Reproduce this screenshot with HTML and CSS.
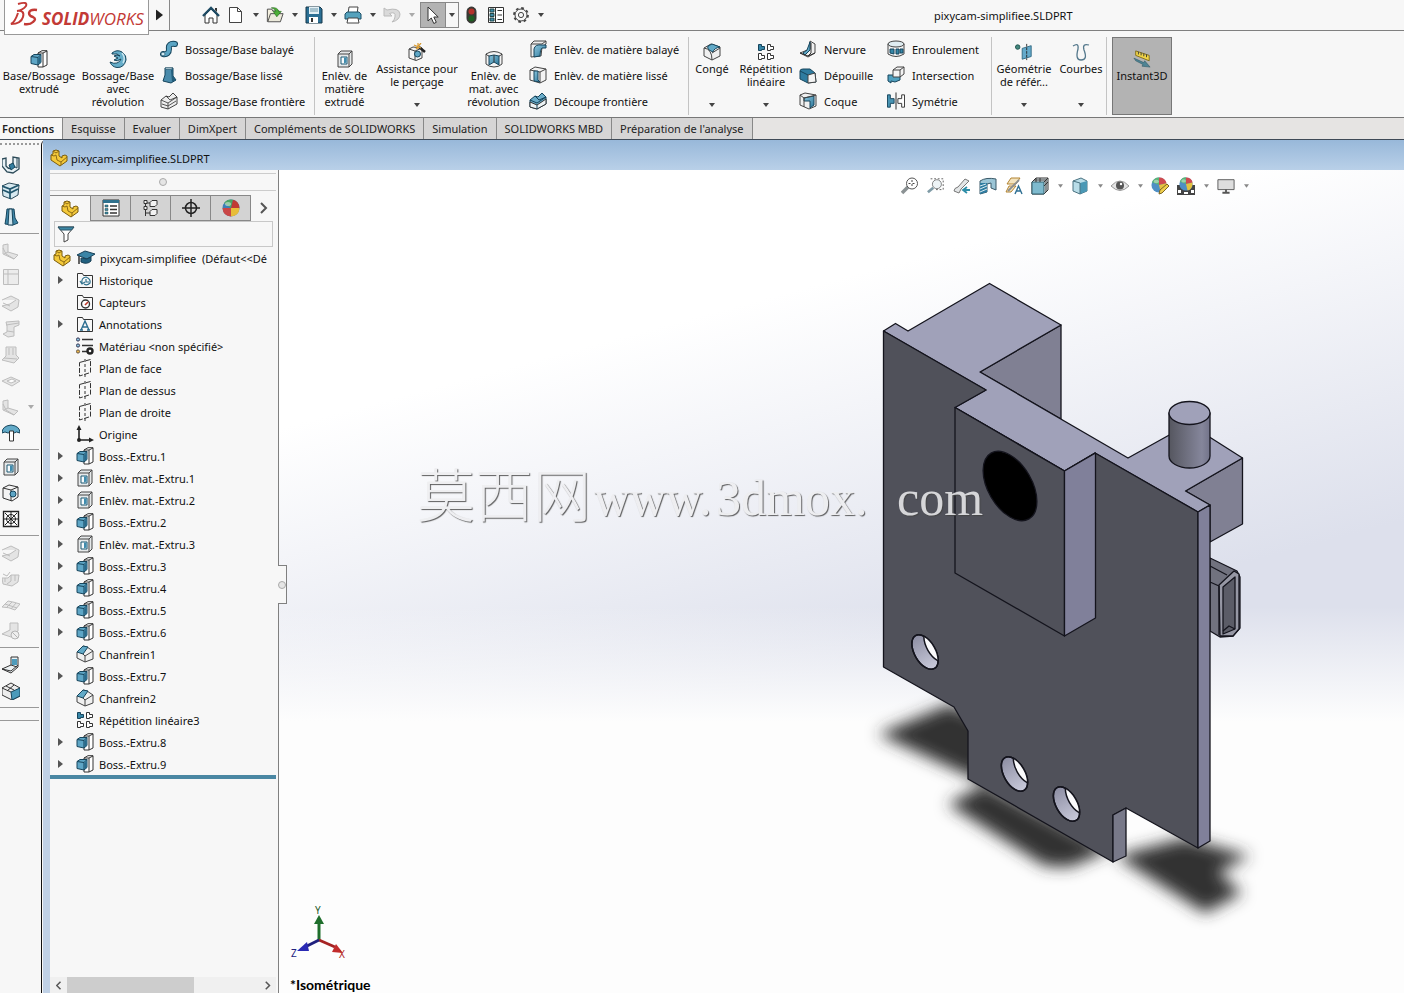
FILE: index.html
```html
<!DOCTYPE html>
<html lang="fr">
<head>
<meta charset="utf-8">
<title>pixycam-simplifiee.SLDPRT</title>
<link rel="stylesheet" href="styles.css">
</head>
<body>
<svg class="sprite" aria-hidden="true">
  <defs>
    <linearGradient id="blue" x1="0" y1="0" x2="1" y2="1"><stop offset="0" stop-color="#8cc6de"/><stop offset="1" stop-color="#2b7699"/></linearGradient>
    <linearGradient id="rod" x1="0" x2="1"><stop offset="0" stop-color="#55565f"/><stop offset=".8" stop-color="#85869b"/><stop offset="1" stop-color="#73748a"/></linearGradient>
    <linearGradient id="bore" x1="0" x2="1"><stop offset="0" stop-color="#8d8ea3"/><stop offset="1" stop-color="#c9cadb"/></linearGradient>
    <filter id="soft" x="-30%" y="-30%" width="160%" height="160%"><feGaussianBlur stdDeviation="8"/></filter>
  </defs>
  <symbol id="home" viewBox="0 0 18 18"><path d="M3 9v8h4v-5h4v5h4V9L9 3z" fill="#fff" stroke="#333"/><path d="M1 10 9 2l8 8" fill="none" stroke="#1d4a63" stroke-width="2.4"/><path d="M13 2h2v4l-2-2z" fill="#333"/></symbol>
  <symbol id="new" viewBox="0 0 18 18"><path d="M2.500 1.500h8l4 4v11h-12z" fill="#fff" stroke="#444"/><path d="M10.500 1.500v4h4" fill="none" stroke="#444"/></symbol>
  <symbol id="open" viewBox="0 0 20 18"><path d="M1.500 16.500v-14h5l1 2h7v3" fill="#f4f0df" stroke="#444"/><path d="m2 16.500 3-9h14l-3 9z" fill="#eceadb" stroke="#444"/><path d="M6 1q7-1 8 4h3l-5 6-4-6h3q-1-3-5-4" fill="#4caf35" stroke="#246b1a" stroke-width=".7"/></symbol>
  <symbol id="save" viewBox="0 0 18 18"><path d="M1 1h14l2 2v14H1z" fill="#2b6f94" stroke="#17384a"/><path d="M4 1h10v7H4z" fill="#e3f0f5"/><path d="M5 3h8M5 5h8" stroke="#6b95a8"/><path d="M4 11h9v6H4z" fill="#fff"/><path d="M6 12h2v4H6z" fill="#333"/></symbol>
  <symbol id="print" viewBox="0 0 18 18"><path d="M5 1h9l-1 7H4z" fill="#fff" stroke="#444"/><path d="m1 8 2-2h12l2 2v5H1z" fill="#55a2bd" stroke="#1d5069"/><path d="M4 12h10l1 5H3z" fill="#fff" stroke="#444"/></symbol>
  <symbol id="undo" viewBox="0 0 18 18"><path d="m1 2v8h8L6.500 7.500Q13 5 12 11q-.5 3-3 5 8-2 8-8-1-7-13-4z" fill="#dadada" stroke="#bbb"/></symbol>
  <symbol id="cursor" viewBox="0 0 18 18"><path d="M4 1v14l3.300-3 2.500 5.500 2.500-1.200L9.800 11h4.400z" fill="#fff" stroke="#333"/></symbol>
  <symbol id="light" viewBox="0 0 18 18"><rect x="5" y="1" width="9" height="16" rx="4.500" fill="#3a3a33" stroke="#333"/><circle cx="9.500" cy="5.500" r="3" fill="#b3312b"/><circle cx="9.500" cy="12.500" r="3" fill="#1d5e22"/></symbol>
  <symbol id="options" viewBox="0 0 18 18"><path d="M1.500 1.500h15v15h-15z" fill="#fff" stroke="#333"/><path d="M3 3h4v3H3zM3 7.500h4v3H3zM3 12h4v3H3z" fill="#3d8cab" stroke="#244"/><path d="M10.500 4.500h4.500M10.500 9h4.500M10.500 13.500h4.500" stroke="#333"/><path d="M8.500 1v16" stroke="#333"/></symbol>
  <symbol id="gear" viewBox="0 0 18 18"><circle cx="9" cy="9" r="7" fill="none" stroke="#444" stroke-width="1.800" stroke-dasharray="2.700 2.800"/><circle cx="9" cy="9" r="6" fill="#f7f7f7" stroke="#444"/><circle cx="9" cy="9" r="2.600" fill="none" stroke="#444"/></symbol>

  <symbol id="boss" viewBox="0 0 18 18"><path d="M8 3 12 .7h5V15l-4 2H8z" fill="#fff" stroke="#333"/><path d="M13 3v14M13 3l4-2M8 3h5" fill="none" stroke="#333"/><path d="m1 6.500 3-2h7v8l-3 2.500-7-1.500z" fill="#5ea6c6" stroke="#16455c"/><path d="m1 6.500 7 1V15M8 7.500l3-3" fill="none" stroke="#16455c"/><path d="m8.500 8 2-2v6.500l-2 1.700z" fill="#276b8c"/></symbol>
  <symbol id="cut" viewBox="0 0 18 18"><path d="m2 4 3-3h11v13l-3 3H2z" fill="#e6e9ea" stroke="#444"/><path d="M2 4h11v13M13 4l3-3" fill="none" stroke="#444"/><path d="M5 7h6v7H5z" fill="#f7fbfd" stroke="#1d5872"/><path d="M8 7.500h2.500v5L8 13.500z" fill="#3f8cae"/></symbol>
  <symbol id="revolve" viewBox="0 0 18 18"><path d="M3 3q5-4 10-1 5 4 4 8-2 8-9 7.500Q3 17 1 12q4 2 7 1 3-1 4-4-4 3-7 1l4-2-4-2q3-2 6 0Q9 3 3 4z" fill="#65adc9" stroke="#16455c"/><path d="M13 3q4 5 1 10" fill="none" stroke="#c9e6f0" stroke-width="1.500"/></symbol>
  <symbol id="sweep" viewBox="0 0 18 18"><path d="M3 14q6 1 6-5-1-6 6-5" fill="none" stroke="#16455c" stroke-width="6" stroke-linecap="round"/><path d="M3 14q6 1 6-5-1-6 6-5" fill="none" stroke="#5ba5c4" stroke-width="4" stroke-linecap="round"/><ellipse cx="3" cy="14" rx="2" ry="1.800" fill="#d2e9f1" stroke="#16455c" stroke-width=".6"/></symbol>
  <symbol id="loft" viewBox="0 0 18 18"><path d="M5 2h8v8l3 4-5 3-8-2 2-6z" fill="#4a8bab" stroke="#16455c"/><path d="M5 2h8l-2 1.500H6z" fill="#d7ebf2" stroke="#16455c" stroke-width=".6"/><path d="m11 4 1 12 4-2-3-4V3z" fill="#225d7b"/></symbol>
  <symbol id="boundary" viewBox="0 0 18 18"><path d="m1 8 5-4 3 1 4-4 4 4v7l-9 5-7-2z" fill="#eee" stroke="#444"/><path d="m1 8 7 3 9-6M8 11v6M6 4l4 4 7-3M2 12l6 2 8-5" fill="none" stroke="#444" stroke-width=".9"/></symbol>
  <symbol id="hole" viewBox="0 0 18 18"><path d="m1 6 4-2 9 1v10l-6 2.500L1 15z" fill="#f3f3f3" stroke="#444"/><path d="m1 6 6 2v9M7 8l7-3" fill="none" stroke="#444"/><circle cx="9.500" cy="11" r="3" fill="#5ea6c6" stroke="#16455c"/><path d="m11 4 6 5" stroke="#222" stroke-width="2.500"/><path d="M10 0v6M6 2l7 3M13 0 8 6" stroke="#d99b31" stroke-width="1.200"/></symbol>
  <symbol id="revcut" viewBox="0 0 18 18"><path d="M1 4v10q3 3 8 3t8-3V4q-8-5-16 0z" fill="#f3f3f3" stroke="#444"/><path d="m9 5-5 1v9l5-3 5 3V6z" fill="url(#blue)" stroke="#16455c"/><path d="M1 4q2 2 3 2M17 4q-2 2-3 2M9 5v7" fill="none" stroke="#333"/></symbol>
  <symbol id="sweepcut" viewBox="0 0 18 18"><path d="M2 4 5 1h12v3l-4 3-1 9-10 1z" fill="#eee" stroke="#444"/><path d="M2 4h11l4-3" fill="none" stroke="#444"/><path d="M5 17V9q1-5 8-4h4v3h-4q-2 1-2 8z" fill="url(#blue)" stroke="#16455c"/></symbol>
  <symbol id="loftcut" viewBox="0 0 18 18"><path d="m1 4 5-3 11 2v11l-6 3L1 14z" fill="#f3f3f3" stroke="#444"/><path d="m1 4 10 2v11M11 6l6-3" fill="none" stroke="#444"/><path d="M5 5h4v9l2 2-6-1z" fill="url(#blue)" stroke="#16455c"/></symbol>
  <symbol id="boundcut" viewBox="0 0 18 18"><path d="m1 8 5-4 3 1 4-4 4 4v7l-9 5-7-2z" fill="#6badca" stroke="#16455c"/><path d="m1 10 7 3 9-6v5l-9 5-7-2z" fill="#edf3f5" stroke="#333"/><path d="M8 13v4M6 4l4 4 7-3M1 8l7 3 9-6" fill="none" stroke="#16455c"/></symbol>
  <symbol id="fillet" viewBox="0 0 18 18"><path d="m1 5 7-4 9 3v9l-8 4-8-4z" fill="#f0f0f0" stroke="#444"/><path d="M5 3 9 1l8 3q-6 1-7 5L6 7Q4 5 5 3" fill="#62aac8" stroke="#16455c"/><path d="M1 5q8 1 8 12M9 10l8-5" fill="none" stroke="#444"/></symbol>
  <symbol id="chamfer" viewBox="0 0 18 18"><path d="m1 7 6-6 4 1 6 4v8l-8 3-8-4z" fill="#f0f0f0" stroke="#444"/><path d="m1 7 6-6 5 1-5 7z" fill="#62aac8" stroke="#16455c"/><path d="m7 9 2 2v6M9 11l8-5" fill="none" stroke="#444"/></symbol>
  <symbol id="pattern" viewBox="0 0 18 18"><path d="M1.500 1.500h3v2h3v3h-3v1h-3z" fill="#3686a8" stroke="#16455c"/><path d="M10.500 1.500h3v2h3v3h-3v1h-3zM1.500 10.500h3v2h3v3h-3v1h-3zM10.500 10.500h3v2h3v3h-3v1h-3z" fill="#fff" stroke="#333"/></symbol>
  <symbol id="rib" viewBox="0 0 18 18"><path d="m1 13 10-4V1l5 3v9l-7 4z" fill="#f0f0f0" stroke="#444"/><path d="m4 13 4-3 3-8v8l-5 5z" fill="#62aac8" stroke="#16455c"/><path d="M1 13l8 3 3-3V3M9 16l7-3" fill="none" stroke="#333"/></symbol>
  <symbol id="draft" viewBox="0 0 18 18"><path d="M1 5q0-2 3-2h7l5 4 1 9-8 1-8-4z" fill="#2f7ca0" stroke="#16455c"/><path d="m9 9 7-2 1 9-8 1z" fill="#f4f4f4" stroke="#444"/><path d="m1 5 8 4" stroke="#16455c"/></symbol>
  <symbol id="shell" viewBox="0 0 18 18"><path d="m1 3 5-2 11 2v11l-7 3-9-4z" fill="#f0f0f0" stroke="#444"/><path d="m5 6 10-2v9l-4 3V9H5z" fill="url(#blue)" stroke="#16455c"/><path d="M1 3l4 3v9M5 6l12-3" fill="none" stroke="#444"/></symbol>
  <symbol id="wrap" viewBox="0 0 18 18"><path d="M1 4v10q8 5 16 0V4z" fill="#f4f4f4" stroke="#444"/><ellipse cx="9" cy="4" rx="8" ry="3" fill="#e0edf2" stroke="#444"/><path d="M3 9h4v5l-4-1zM9 9h3v5H9zM13 9h3v4h-3z" fill="#3587a8" stroke="#16455c"/></symbol>
  <symbol id="intersect" viewBox="0 0 18 18"><path d="M1 9h8l4-2v7l-5 2-4-1v2l-3-2z" fill="#51a0bf" stroke="#16455c"/><path d="m6 4 4-3h7v7l-4 3H6z" fill="#f4f4f4" stroke="#444"/><path d="M6 4h7v7M13 4l4-3" fill="none" stroke="#444"/></symbol>
  <symbol id="mirror" viewBox="0 0 19 18"><path d="M.500 2.500h3v4h4v5h-4v4h-3z" fill="#4894b3" stroke="#16455c"/><path d="M9.500 0v18" stroke="#222"/><path d="M18.500 2.500h-3v4h-4v5h4v4h3z" fill="#fff" stroke="#333"/></symbol>
  <symbol id="refgeom" viewBox="0 0 20 18"><circle cx="3" cy="3.500" r="2.500" fill="#44877f" stroke="#1c524c"/><path d="m8 5 10-3v12l-10 3z" fill="#64aacb" stroke="#2e6680"/><path d="M13 0v18" stroke="#222" stroke-dasharray="3 1"/></symbol>
  <symbol id="curves" viewBox="0 0 18 18"><path d="M1 3q6-4 5 3-3 11 3 11 7 0 3-10-2-7 5-5" fill="none" stroke="#54788c" stroke-width="1.300"/></symbol>
  <symbol id="instant" viewBox="0 0 20 20"><path d="m3 1 15 5v6L3 6z" fill="#f2d548" stroke="#7d6a18"/><path d="M6 2v3M9 3v3M12 4v3M15 5v3" stroke="#333"/><path d="m1 9 11 5 1-2 6 7-9-1 1-2-8-4z" fill="#4f8494" stroke="#2c5663" stroke-width=".6"/></symbol>

  <symbol id="part" viewBox="0 0 18 18"><path d="m1 6 2-1V2l3-1 3 1v5l3 2V7l3-1 2 1v5l-7 5-9-6z" fill="#f4c93a" stroke="#7b5c0d"/><path d="m1 6 3 1 2-1 1 5 4 2v3M3 2l3 2 3-2M11 13l6-5" fill="none" stroke="#8c6b16"/></symbol>
  <symbol id="cap" viewBox="0 0 20 18"><path d="m1 6 8-4 10 3-8 5z" fill="#3a84a6" stroke="#173f56"/><path d="m5 9 6 1 4-2v4q-4 4-10 1z" fill="#20607f" stroke="#173f56"/><path d="M3 7v8" stroke="#333" stroke-width="1.500"/></symbol>
  <symbol id="folder" viewBox="0 0 18 18"><path d="M1.500 16.500V2.500h5l1 2h9v12z" fill="#f8f8f8" stroke="#333"/></symbol>
  <symbol id="history" viewBox="0 0 18 18"><use href="#folder"/><path d="M6 12q-1-5 4-6 5 2 4 6-3 3-6 1M4 10l2 3 3-2M10 8v3h3" fill="none" stroke="#2f718d" stroke-width="1.200"/></symbol>
  <symbol id="sensor" viewBox="0 0 18 18"><use href="#folder"/><circle cx="9.500" cy="11" r="4" fill="#fff" stroke="#333" stroke-width="1.400"/><path d="m9 12 3-3" stroke="#c0392b" stroke-width="1.600"/></symbol>
  <symbol id="annot" viewBox="0 0 18 18"><use href="#folder"/><path d="m5 15 4-9 4 9M6.500 12h5M4 15h3M11 15h3" fill="none" stroke="#2b6d90" stroke-width="1.400"/></symbol>
  <symbol id="material" viewBox="0 0 18 18"><circle cx="2" cy="2.500" r="1.600" fill="#8cc6de" stroke="#335"/><circle cx="2" cy="8.500" r="1.600" fill="#8cc6de" stroke="#335"/><circle cx="2" cy="14.500" r="1.600" fill="#e9b64a" stroke="#654"/><path d="M6 2.500h11M6 8.500h11M6 14.500h5" stroke="#333" stroke-width="1.500"/><circle cx="14" cy="14" r="2.500" fill="none" stroke="#222" stroke-width="2.400"/></symbol>
  <symbol id="plane" viewBox="0 0 18 18"><path d="M3.500 3.500 14.500.500v13l-11 3.500z" fill="none" stroke="#333" stroke-dasharray="5 1.500"/><path d="M9 0v18" stroke="#333" stroke-dasharray="3 2"/></symbol>
  <symbol id="origin" viewBox="0 0 18 18"><path d="M3 4v11h12" fill="none" stroke="#222" stroke-width="1.600"/><path d="M3 0 .500 5h5zM18 15l-5-2.500v5z" fill="#222"/><circle cx="3" cy="15" r="2" fill="#222"/></symbol>
  <symbol id="list" viewBox="0 0 18 18"><path d="M1 1h16v16H1z" fill="#fff" stroke="#333"/><path d="M1 1h16v3H1z" fill="#2f718d"/><path d="M3 6h3v2H3zM3 9.500h3v2H3zM3 13h3v2H3z" fill="#3d8cab" stroke="#244" stroke-width=".5"/><path d="M8 7h7M8 10.500h7M8 14h7" stroke="#333" stroke-width="1.300"/></symbol>
  <symbol id="config" viewBox="0 0 18 18"><path d="M3.500 1v16M3.500 4h6M3.500 14h6" fill="none" stroke="#333"/><path d="M2 1.500h3v3H2zM8 3.500l2-2h5v4l-2 2H8zM8 12.500l2-2h5v4l-2 2H8zM2 7.500h3v3H2z" fill="#f2f2f2" stroke="#333"/></symbol>
  <symbol id="target" viewBox="0 0 18 18"><circle cx="9" cy="9" r="5.500" fill="none" stroke="#222" stroke-width="1.500"/><path d="M9 0v18M0 9h18" stroke="#222" stroke-width="1.500"/></symbol>
  <symbol id="ball" viewBox="0 0 18 18"><circle cx="9" cy="9" r="8.500" fill="#3c7fb5"/><path d="M9 9 2 4Q6-.5 11 .8z" fill="#4aa564"/><path d="m9 9 2-8.200Q17 2 17.500 9z" fill="#c03a34"/><path d="M9 9h8.500Q17 17 9 17.500z" fill="#e8bd39"/><path d="M9 9v8.500Q1 17 .5 9z" fill="#c94646"/><ellipse cx="6" cy="5" rx="3" ry="2" fill="#fff" opacity=".45"/></symbol>
  <symbol id="ballview" viewBox="0 0 18 18"><circle cx="9" cy="9" r="8.500" fill="#4f8fc4"/><path d="M9 9 1 6Q4 0 9 .5z" fill="#5bb377"/><path d="M9 9V.5q7 0 8.500 6.500z" fill="#cf4a4f"/><path d="m9 9 8.500-2q0 9-6.500 10.300z" fill="#e5c23f"/><ellipse cx="6" cy="5" rx="3" ry="2" fill="#fff" opacity=".4"/></symbol>
  <symbol id="filter" viewBox="0 0 18 18"><path d="M1 2h16l-6 7v6l-4 2V9z" fill="#fff" stroke="#444"/><path d="M1 2h16l-2.500 3h-11z" fill="#3c87a5" stroke="#2b5568"/></symbol>

  <symbol id="ucut" viewBox="0 0 18 18"><path d="m0 3 4-1v8q4 5 7 0V1l6 1v11l-6 4-6-1-5-6z" fill="#e8f1f5" stroke="#2c4a58" stroke-width="1.300"/><path d="M11 10l4 2V2" fill="none" stroke="#2c4a58"/><path d="m7 9 4-2 2 4-4 3z" fill="#357fa1" stroke="#16455c"/></symbol>
  <symbol id="bend" viewBox="0 0 18 18"><path d="m0 4 7-3 10 2-1 10-7 4-8-3z" fill="#d7e9f0" stroke="#2c4a58"/><path d="m0 4 8 3 9-4M1 8l7 3 8-4M8 7v10" fill="none" stroke="#21566d" stroke-width="1.700"/></symbol>
  <symbol id="flare" viewBox="0 0 18 18"><path d="M5 1h7l1 9 3 5-5 2-8-1 1-6z" fill="#3f87a8" stroke="#16455c"/><path d="M7 1h3l1 16H6z" fill="#cfe3eb" stroke="#16455c"/></symbol>
  <symbol id="g1" viewBox="0 0 18 18"><path d="m1 3 5-1v8l10 3-4 4-11-5z" fill="#e4e4e4" stroke="#bdbdbd"/><path d="m1 6 3 6 8 5M6 10l-4 2" fill="none" stroke="#bdbdbd"/></symbol>
  <symbol id="g2" viewBox="0 0 18 18"><path d="M1.500 1.500h15v15h-15zM1 6h16M6 1v16" fill="#ececec" stroke="#bdbdbd"/></symbol>
  <symbol id="g3" viewBox="0 0 18 18"><path d="m0 6 9-4 8 4-1 7-7 4-9-5 8-2 6-4M1 9l7 3" fill="#e4e4e4" stroke="#bdbdbd"/></symbol>
  <symbol id="g4" viewBox="0 0 18 18"><path d="m4 2 13-1v4l-5 2v9l-6 1-5-3 4-2V6z" fill="#e4e4e4" stroke="#bdbdbd"/><path d="m4 5 13-2M5 11l7 1" stroke="#bdbdbd"/></symbol>
  <symbol id="g5" viewBox="0 0 18 18"><path d="M4 1h10v8l3 3-5 5-12-3 4-4z" fill="#e4e4e4" stroke="#bdbdbd"/><path d="M7 2v7M11 2v7M2 12l13 1" stroke="#bdbdbd"/></symbol>
  <symbol id="g6" viewBox="0 0 18 18"><path d="m0 9 9-4 9 4-8 5z" fill="#e6e6e6" stroke="#bdbdbd"/><path d="m5 9 5-2 4 2-5 2z" fill="#fff" stroke="#bdbdbd"/></symbol>
  <symbol id="g7" viewBox="0 0 18 18"><path d="M0 8h6l3-3h8l-1 7-6 4-9-2z" fill="#e4e4e4" stroke="#bdbdbd"/><path d="M9 5v6l-4 3M13 5v6M3 8v4M1 4l4 2 3-4" fill="none" stroke="#bdbdbd"/></symbol>
  <symbol id="g8" viewBox="0 0 18 18"><path d="m0 11 6-6q6 1 12 3l-5 6Q7 11 0 11z" fill="#e8e8e8" stroke="#bdbdbd"/><path d="m4 12 6-6M9 13l5-6M3 8l12 4" stroke="#bdbdbd"/></symbol>
  <symbol id="g9" viewBox="0 0 18 18"><path d="M8 1h8v8l-7 6-9-3 8-4z" fill="#e4e4e4" stroke="#bdbdbd"/><circle cx="13" cy="13" r="4" fill="#eee" stroke="#b5b5b5"/><path d="m10 10 6 6" stroke="#b5b5b5"/></symbol>
  <symbol id="umbrella" viewBox="0 0 18 18"><path d="M0 9q0-7 9-8 9 1 9 8-4-2-6 0-3-2-6 0-3-2-6 0z" fill="#62aac8" stroke="#16455c"/><path d="M7.500 7h4v10h-4z" fill="#fff" stroke="#333"/></symbol>
  <symbol id="grid" viewBox="0 0 18 18"><path d="M1.500 1.500h15v15h-15z" fill="#fff" stroke="#222" stroke-width="1.400"/><path d="M9 1v16M1 9h16M3 3l12 12M15 3 3 15" stroke="#222"/><circle cx="9" cy="9" r="4.500" fill="none" stroke="#222"/></symbol>
  <symbol id="box" viewBox="0 0 18 18"><path d="m1 4 6-3 9 2v10l-6 4-9-3z" fill="#f4f4f4" stroke="#333"/><path d="m1 4 8 2 7-3M9 6v11" fill="none" stroke="#333"/><circle cx="11" cy="10" r="3" fill="#5ea6c6" stroke="#16455c"/></symbol>
  <symbol id="hinge" viewBox="0 0 18 18"><path d="M9 1h7v10l-7 6-9-4 9-4z" fill="#edf2f4" stroke="#333"/><path d="M10 3h5v6h-5z" fill="#4f9cbc"/><path d="m0 13 9 2 7-6M9 9l6 2" fill="none" stroke="#333"/></symbol>
  <symbol id="weld" viewBox="0 0 18 18"><path d="m0 6 9-5 9 5v8l-8 4-10-5z" fill="#ededed" stroke="#333"/><path d="m9 10 9-4v8l-8 4z" fill="#4a9aba" stroke="#16455c"/><path d="m0 6 9 4M4 4l8 4M5 9l7-6" stroke="#333"/></symbol>

  <symbol id="zoomfit" viewBox="0 0 18 18"><path d="m1 16 6-6" stroke="#8b9294" stroke-width="3.500"/><circle cx="11" cy="6.500" r="5.500" fill="#fff" stroke="#555"/><path d="M11 3v7M7.500 6.500h7" stroke="#444" stroke-dasharray="2 2"/></symbol>
  <symbol id="zoomarea" viewBox="0 0 20 18"><path d="M4 1h14v12H8" fill="none" stroke="#555" stroke-dasharray="2 2"/><path d="m1 16 6-5" stroke="#7f9ba6" stroke-width="3"/><circle cx="11" cy="7" r="5" fill="#eef4f6" stroke="#777"/></symbol>
  <symbol id="prev" viewBox="0 0 18 18"><path d="M1 14q0-3 4-4l7-8 4 2-8 8-2 4z" fill="#e3e6e7" stroke="#777"/><path d="M17 13h-6m3-3-4 3 4 3" fill="none" stroke="#2e8ea8" stroke-width="1.800"/></symbol>
  <symbol id="section" viewBox="0 0 18 18"><path d="M1 4q6-4 16-2v11l-5-2V6l-4 1v8l-7 2z" fill="#9bc5d6" stroke="#3a5968"/><path d="M1 6h7v9l-7 2z" fill="#2f7ca0"/><path d="m1 9 6-2M1 12l7-3M1 15l7-3" stroke="#d5e9f0"/></symbol>
  <symbol id="viewannot" viewBox="0 0 18 18"><path d="M6 1h9l-4 6H2zM4 9h7l-5 6H1z" fill="#f3e3be" stroke="#b28432"/><path d="M3 14 14 3" stroke="#8a8d8f" stroke-width="1.800"/><path d="m10 17 3.500-8 3.500 8M11 14h5" fill="none" stroke="#2e6f93" stroke-width="1.400"/></symbol>
  <symbol id="orient" viewBox="0 0 18 18"><path d="m1 5 4-4h12v12l-4 4H1z" fill="#e6eff2" stroke="#333"/><path d="M1 5h12v12H1z" fill="#7ebace" stroke="#32606f"/><path d="m13 5 4-4M5 1v4M9 1v4M13 9l4-4M15 3v12M3 3h12" stroke="#333"/></symbol>
  <symbol id="cube" viewBox="0 0 18 18"><path d="m2 4 8-3 6 3v10l-7 3-7-3z" fill="#b9dde8" stroke="#4a7281"/><path d="m9 6 7-2v10l-7 3z" fill="#4a98b5"/><path d="m2 4 7 2v11" fill="none" stroke="#4a7281"/></symbol>
  <symbol id="eye" viewBox="0 0 18 18"><path d="M0 9q9-10 18 0-9 9-18 0z" fill="#e4e4e4" stroke="#999"/><circle cx="9" cy="8.500" r="4" fill="#555"/><circle cx="10" cy="7" r="1.200" fill="#fff"/></symbol>
  <symbol id="pencilball" viewBox="0 0 18 18"><use href="#ballview" width="16" height="16"/><path d="m8 17 1-4 7-6 2 2-7 7z" fill="#f0cf4d" stroke="#7b6422"/></symbol>
  <symbol id="scene" viewBox="0 0 18 18"><path d="M0 8h18v10H0z" fill="#444"/><path d="M1 13h3v3H1zM7 15h4v2H7zM14 13h3v3h-3z" fill="#fff"/><use href="#ballview" x="2" width="14" height="14"/></symbol>
  <symbol id="screen" viewBox="0 0 20 18"><path d="M1 2h18v11H1z" fill="#dedede" stroke="#555"/><path d="M10 13v3M6 16.500h8" stroke="#555" stroke-width="2"/></symbol>
  <symbol id="down" viewBox="0 0 6 4"><path d="M0 0h6L3 4z" fill="currentColor"/></symbol>
  <symbol id="right" viewBox="0 0 5 8"><path d="M0 0l5 4-5 4z" fill="currentColor"/></symbol>
</svg>

<header class="appbar">
  <div class="brand">
    <svg class="brand-mark" viewBox="0 0 28 28" aria-hidden="true"><path d="M8 3q10-3 8 2-3 4-9 5 8-1 6 6-2 7-12 7 4-2 7-11" fill="none" stroke="#c33a36" stroke-width="2"/><path d="M27 9q-7-1-8 3 0 3 4 4 4 2 0 5-3 3-9 2" fill="none" stroke="#c33a36" stroke-width="2.400"/></svg>
    <span class="brand-name"><b>SOLID</b>WORKS</span>
  </div>
  <button class="brand-more" aria-label="Menu"><svg viewBox="0 0 5 8"><use href="#right"/></svg></button>
  <nav class="quick" aria-label="Accès rapide">
    <button aria-label="Accueil"><svg class="ico"><use href="#home"/></svg></button>
    <button class="split" aria-label="Nouveau"><svg class="ico"><use href="#new"/></svg><svg class="caret"><use href="#down"/></svg></button>
    <button class="split" aria-label="Ouvrir"><svg class="ico"><use href="#open"/></svg><svg class="caret"><use href="#down"/></svg></button>
    <button class="split" aria-label="Enregistrer"><svg class="ico"><use href="#save"/></svg><svg class="caret"><use href="#down"/></svg></button>
    <button class="split" aria-label="Imprimer"><svg class="ico"><use href="#print"/></svg><svg class="caret"><use href="#down"/></svg></button>
    <button class="split faded" aria-label="Annuler"><svg class="ico"><use href="#undo"/></svg><svg class="caret"><use href="#down"/></svg></button>
    <button class="pick" aria-label="Sélectionner"><span class="pick-icon"><svg class="ico"><use href="#cursor"/></svg></span><span class="pick-caret"><svg class="caret"><use href="#down"/></svg></span></button>
    <button aria-label="Reconstruire"><svg class="ico"><use href="#light"/></svg></button>
    <button aria-label="Propriétés"><svg class="ico"><use href="#options"/></svg></button>
    <button class="split" aria-label="Options"><svg class="ico"><use href="#gear"/></svg><svg class="caret"><use href="#down"/></svg></button>
  </nav>
  <div class="apptitle">pixycam-simplifiee.SLDPRT</div>
</header>

<section class="ribbon" aria-label="Fonctions">
  <div class="group group-boss">
    <button class="big low"><svg class="ico"><use href="#boss"/></svg><span>Base/Bossage<br>extrudé</span></button>
    <button class="big low"><svg class="ico"><use href="#revolve"/></svg><span>Bossage/Base<br>avec<br>révolution</span></button>
    <div class="stack">
      <button><svg class="ico"><use href="#sweep"/></svg>Bossage/Base balayé</button>
      <button><svg class="ico"><use href="#loft"/></svg>Bossage/Base lissé</button>
      <button><svg class="ico"><use href="#boundary"/></svg>Bossage/Base frontière</button>
    </div>
  </div>
  <div class="group group-cut">
    <button class="big low"><svg class="ico"><use href="#cut"/></svg><span>Enlèv. de<br>matière<br>extrudé</span></button>
    <button class="big"><svg class="ico"><use href="#hole"/></svg><span>Assistance pour<br>le perçage</span><svg class="caret"><use href="#down"/></svg></button>
    <button class="big low"><svg class="ico"><use href="#revcut"/></svg><span>Enlèv. de<br>mat. avec<br>révolution</span></button>
    <div class="stack">
      <button><svg class="ico"><use href="#sweepcut"/></svg>Enlèv. de matière balayé</button>
      <button><svg class="ico"><use href="#loftcut"/></svg>Enlèv. de matière lissé</button>
      <button><svg class="ico"><use href="#boundcut"/></svg>Découpe frontière</button>
    </div>
  </div>
  <div class="group group-feat">
    <button class="big"><svg class="ico"><use href="#fillet"/></svg><span>Congé</span><svg class="caret"><use href="#down"/></svg></button>
    <button class="big"><svg class="ico"><use href="#pattern"/></svg><span>Répétition<br>linéaire</span><svg class="caret"><use href="#down"/></svg></button>
    <div class="stack">
      <button><svg class="ico"><use href="#rib"/></svg>Nervure</button>
      <button><svg class="ico"><use href="#draft"/></svg>Dépouille</button>
      <button><svg class="ico"><use href="#shell"/></svg>Coque</button>
    </div>
    <div class="stack">
      <button><svg class="ico"><use href="#wrap"/></svg>Enroulement</button>
      <button><svg class="ico"><use href="#intersect"/></svg>Intersection</button>
      <button><svg class="ico"><use href="#mirror"/></svg>Symétrie</button>
    </div>
  </div>
  <div class="group group-ref">
    <button class="big"><svg class="ico"><use href="#refgeom"/></svg><span>Géométrie<br>de référ...</span><svg class="caret"><use href="#down"/></svg></button>
    <button class="big"><svg class="ico"><use href="#curves"/></svg><span>Courbes</span><svg class="caret"><use href="#down"/></svg></button>
  </div>
  <div class="group group-last">
    <button class="big low pressed" aria-pressed="true"><svg class="ico"><use href="#instant"/></svg><span>Instant3D</span></button>
  </div>
</section>

<nav class="tabs" aria-label="Onglets">
  <button class="tab active">Fonctions</button>
  <button class="tab">Esquisse</button>
  <button class="tab">Evaluer</button>
  <button class="tab">DimXpert</button>
  <button class="tab">Compléments de SOLIDWORKS</button>
  <button class="tab">Simulation</button>
  <button class="tab">SOLIDWORKS MBD</button>
  <button class="tab">Préparation de l'analyse</button>
</nav>

<div class="work">
  <aside class="rail" aria-label="Outils">
    <div class="rail-group first">
      <button><svg class="ico"><use href="#ucut"/></svg></button>
      <button><svg class="ico"><use href="#bend"/></svg></button>
      <button><svg class="ico"><use href="#flare"/></svg></button>
    </div>
    <div class="rail-group">
      <button><svg class="ico"><use href="#g1"/></svg></button>
      <button><svg class="ico"><use href="#g2"/></svg></button>
      <button><svg class="ico"><use href="#g3"/></svg></button>
      <button><svg class="ico"><use href="#g4"/></svg></button>
      <button><svg class="ico"><use href="#g5"/></svg></button>
      <button><svg class="ico"><use href="#g6"/></svg></button>
      <button class="faded"><svg class="ico"><use href="#g1"/></svg><svg class="caret"><use href="#down"/></svg></button>
      <button><svg class="ico"><use href="#umbrella"/></svg></button>
    </div>
    <div class="rail-group">
      <button><svg class="ico"><use href="#cut"/></svg></button>
      <button><svg class="ico"><use href="#box"/></svg></button>
      <button><svg class="ico"><use href="#grid"/></svg></button>
    </div>
    <div class="rail-group">
      <button><svg class="ico"><use href="#g3"/></svg></button>
      <button><svg class="ico"><use href="#g7"/></svg></button>
      <button><svg class="ico"><use href="#g8"/></svg></button>
      <button><svg class="ico"><use href="#g9"/></svg></button>
    </div>
    <div class="rail-group">
      <button><svg class="ico"><use href="#hinge"/></svg></button>
      <button><svg class="ico"><use href="#weld"/></svg></button>
    </div>
    <div class="rail-group"></div>
  </aside>

  <main class="doc">
    <div class="doc-title"><svg class="ico"><use href="#part"/></svg>pixycam-simplifiee.SLDPRT</div>
    <div class="doc-body">
      <section class="panel">
        <div class="grip"></div>
        <div class="panel-tabs">
          <button class="ptab on" aria-label="Arbre"><svg class="ico"><use href="#part"/></svg></button>
          <button class="ptab" aria-label="Propriétés"><svg class="ico"><use href="#list"/></svg></button>
          <button class="ptab" aria-label="Configurations"><svg class="ico"><use href="#config"/></svg></button>
          <button class="ptab" aria-label="DimXpert"><svg class="ico"><use href="#target"/></svg></button>
          <button class="ptab" aria-label="Affichage"><svg class="ico"><use href="#ball"/></svg></button>
          <button class="pnext" aria-label="Suivant"><svg class="chev" viewBox="0 0 8 12"><path d="m1 1 5 5-5 5"/></svg></button>
        </div>
        <label class="filter"><svg class="ico"><use href="#filter"/></svg><input type="text" aria-label="Filtre"></label>
        <ul class="tree">
          <li class="root"><svg class="ico"><use href="#part"/></svg><svg class="ico wide"><use href="#cap"/></svg><span>pixycam-simplifiee&nbsp; (Défaut&lt;&lt;Dé</span></li>
          <li><svg class="exp"><use href="#right"/></svg><svg class="ico"><use href="#history"/></svg>Historique</li>
          <li><svg class="exp"></svg><svg class="ico"><use href="#sensor"/></svg>Capteurs</li>
          <li><svg class="exp"><use href="#right"/></svg><svg class="ico"><use href="#annot"/></svg>Annotations</li>
          <li><svg class="exp"></svg><svg class="ico"><use href="#material"/></svg>Matériau &lt;non spécifié&gt;</li>
          <li><svg class="exp"></svg><svg class="ico"><use href="#plane"/></svg>Plan de face</li>
          <li><svg class="exp"></svg><svg class="ico"><use href="#plane"/></svg>Plan de dessus</li>
          <li><svg class="exp"></svg><svg class="ico"><use href="#plane"/></svg>Plan de droite</li>
          <li><svg class="exp"></svg><svg class="ico"><use href="#origin"/></svg>Origine</li>
          <li><svg class="exp"><use href="#right"/></svg><svg class="ico"><use href="#boss"/></svg>Boss.-Extru.1</li>
          <li><svg class="exp"><use href="#right"/></svg><svg class="ico"><use href="#cut"/></svg>Enlèv. mat.-Extru.1</li>
          <li><svg class="exp"><use href="#right"/></svg><svg class="ico"><use href="#cut"/></svg>Enlèv. mat.-Extru.2</li>
          <li><svg class="exp"><use href="#right"/></svg><svg class="ico"><use href="#boss"/></svg>Boss.-Extru.2</li>
          <li><svg class="exp"><use href="#right"/></svg><svg class="ico"><use href="#cut"/></svg>Enlèv. mat.-Extru.3</li>
          <li><svg class="exp"><use href="#right"/></svg><svg class="ico"><use href="#boss"/></svg>Boss.-Extru.3</li>
          <li><svg class="exp"><use href="#right"/></svg><svg class="ico"><use href="#boss"/></svg>Boss.-Extru.4</li>
          <li><svg class="exp"><use href="#right"/></svg><svg class="ico"><use href="#boss"/></svg>Boss.-Extru.5</li>
          <li><svg class="exp"><use href="#right"/></svg><svg class="ico"><use href="#boss"/></svg>Boss.-Extru.6</li>
          <li><svg class="exp"></svg><svg class="ico"><use href="#chamfer"/></svg>Chanfrein1</li>
          <li><svg class="exp"><use href="#right"/></svg><svg class="ico"><use href="#boss"/></svg>Boss.-Extru.7</li>
          <li><svg class="exp"></svg><svg class="ico"><use href="#chamfer"/></svg>Chanfrein2</li>
          <li><svg class="exp"></svg><svg class="ico"><use href="#pattern"/></svg>Répétition linéaire3</li>
          <li><svg class="exp"><use href="#right"/></svg><svg class="ico"><use href="#boss"/></svg>Boss.-Extru.8</li>
          <li><svg class="exp"><use href="#right"/></svg><svg class="ico"><use href="#boss"/></svg>Boss.-Extru.9</li>
        </ul>
        <div class="hscroll">
          <button aria-label="Gauche"><svg class="chev small" viewBox="0 0 8 12"><path d="M6 1 1 6l5 5"/></svg></button>
          <div class="track"><div class="thumb"></div></div>
          <button aria-label="Droite"><svg class="chev small" viewBox="0 0 8 12"><path d="m1 1 5 5-5 5"/></svg></button>
        </div>
        <div class="flap"></div>
      </section>

      <section class="viewport">
        <svg class="scene" viewBox="279 170 1125 823" preserveAspectRatio="xMinYMin slice" role="img" aria-label="Modèle pixycam">
          <g filter="url(#soft)" fill="#303030">
            <path d="M878 734 950 704 990 722V784L960 772z"/>
            <path d="M948 804 985 784 1110 850 1070 867 1045 866z"/>
            <path d="M1116 856 1185 838 1250 856 1218 872 1242 893 1205 913z"/>
          </g>
          <g stroke="#14141d" stroke-width="1.300" stroke-linejoin="round">
            <path d="M1210 558 1237 571 1240 577V628L1233 636 1220 637 1210 631z" fill="#71727f"/>
            <path d="M1219 585 1234 571 1239 574V629L1233 636H1220z" fill="#9697a4"/>
            <path d="M1223 587 1235 577V629L1223 634z" fill="#5b5c67"/>
            <path d="M1223 631 1229 626 1235 629M1210 566 1227 575M1210 582 1219 586V635" fill="none"/>
            <path d="M1185.500 491 1242.500 458V524L1210 542V505z" fill="#808093"/>
            <path d="M980 372 1061 325V419z" fill="#808093"/>
            <path d="M883.500 331 895.500 323.500 908 331 989.500 283.500 1061 325 980 372 1128 458 1189 424 1242.500 458 1185.500 491 1210 505 1198 512 1095 453 1064.500 471 955 407.500 986 390z" fill="#a0a1b9"/>
            <path d="M883.500 331 986 390 955 407.500 1064.500 471 1095 453 1198 512V848L1126 808 1113 815V862L968 779V731L954 707 883.500 667z" fill="#50515a"/>
            <path d="M1113 815 1126 808V856L1113 862z" fill="#787989"/>
            <path d="M1198 512 1210 505V841L1198 848z" fill="#80809a"/>
            <path d="M955 407.500 1064.500 471V636L955 573z" fill="#50515a"/>
            <path d="M1064.500 471 1095.500 453V618L1064.500 636z" fill="#80809a"/>
            <ellipse cx="1010" cy="486" rx="38" ry="22" transform="rotate(60 1010 486)" fill="#000"/>
            <path d="M1169 413V456A20.500 12 0 0 0 1210 456V413z" fill="url(#rod)"/>
            <ellipse cx="1189.500" cy="413" rx="20.500" ry="11.500" fill="#a0a1b9"/>
          </g>
          <defs><clipPath id="bore-clip"><ellipse rx="19" ry="10.500" transform="rotate(60)"/></clipPath>
            <g id="bolt" stroke="#14141d" stroke-width="1.500">
              <ellipse rx="19" ry="10.500" transform="rotate(60)" fill="url(#bore)"/>
              <g clip-path="url(#bore-clip)"><ellipse rx="19" ry="10.500" transform="translate(12 -7) rotate(60)" fill="#fafafc"/></g>
              <ellipse rx="19" ry="10.500" transform="rotate(60)" fill="none"/>
            </g>
          </defs>
          <use href="#bolt" transform="translate(925 652)"/>
          <use href="#bolt" transform="translate(1014.500 774)"/>
          <use href="#bolt" transform="translate(1066.500 804)"/>
          <g class="mark">
            <text class="mark-cjk" x="417" y="517">莫西网</text>
            <text x="594" y="515">www.</text>
            <text x="716" y="515">3dmox.</text>
            <text x="897" y="515">com</text>
          </g>
          <g stroke-width="3">
            <path d="M319 940V921" stroke="#1f6e2c"/><path d="m319 915-5 9h10z" fill="#1f6e2c"/>
            <path d="m319 940 16 7" stroke="#a62323"/><path d="m343 953-11-1 4-8z" fill="#c22c2c"/>
            <path d="m319 940-14 7" stroke="#20207e"/><path d="m297 951 10-9 2 9z" fill="#2a2ab4"/>
          </g>
          <g class="axis"><text x="315" y="914" fill="#1f5a2c">Y</text><text x="339" y="958" fill="#b02525">X</text><text x="291" y="957" fill="#22227e">Z</text></g>
          <text class="view-name" x="290" y="990">*Isométrique</text>
        </svg>
        <nav class="viewbar" aria-label="Affichage">
          <button aria-label="Zoom au mieux"><svg class="ico"><use href="#zoomfit"/></svg></button>
          <button aria-label="Zoom fenêtre"><svg class="ico"><use href="#zoomarea"/></svg></button>
          <button aria-label="Vue précédente"><svg class="ico"><use href="#prev"/></svg></button>
          <button aria-label="Vue en coupe"><svg class="ico"><use href="#section"/></svg></button>
          <button aria-label="Annotations"><svg class="ico"><use href="#viewannot"/></svg></button>
          <button class="menu" aria-label="Orientation"><svg class="ico"><use href="#orient"/></svg><svg class="caret"><use href="#down"/></svg></button>
          <button class="menu" aria-label="Style"><svg class="ico"><use href="#cube"/></svg><svg class="caret"><use href="#down"/></svg></button>
          <button class="menu" aria-label="Masquer"><svg class="ico"><use href="#eye"/></svg><svg class="caret"><use href="#down"/></svg></button>
          <button aria-label="Apparence"><svg class="ico"><use href="#pencilball"/></svg></button>
          <button class="menu" aria-label="Scène"><svg class="ico"><use href="#scene"/></svg><svg class="caret"><use href="#down"/></svg></button>
          <button class="menu" aria-label="Vue"><svg class="ico"><use href="#screen"/></svg><svg class="caret"><use href="#down"/></svg></button>
        </nav>
      </section>
    </div>
  </main>
</div>
</body>
</html>
```
FILE: styles.css
```css
* { box-sizing: border-box; }
body {
  margin: 0;
  height: 100vh;
  display: flex;
  flex-direction: column;
  overflow: hidden;
  background: #f7f7f7;
  color: #111;
  font: 11px/13px "Noto Sans", "Open Sans", sans-serif;
}
button {
  margin: 0;
  padding: 0;
  border: 0;
  background: none;
  color: inherit;
  font: inherit;
}
svg { display: block; flex: none; }
.sprite { position: absolute; width: 0; height: 0; }
.ico { width: 18px; height: 18px; }
.caret { width: 6px; height: 4px; color: #444; }
.faded .caret { color: #aaa; }

.appbar {
  display: flex;
  flex: none;
  align-items: center;
  height: 31px;
  border-bottom: 1px solid #808080;
}
.brand {
  display: flex;
  align-items: center;
  gap: 4px;
  align-self: flex-start;
  width: 145px;
  height: 35px;
  margin-left: 4px;
  padding: 0 4px 4px 5px;
  border: 1px solid #999;
  border-top: 0;
  background: #fff;
  z-index: 1;
}
.brand-mark { width: 28px; height: 28px; }
.brand-name {
  color: #c33a36;
  font: italic 17px/20px "Open Sans", "Noto Sans", sans-serif;
  padding-top: 7px;
}
.brand-more {
  display: flex;
  align-items: center;
  justify-content: center;
  align-self: stretch;
  width: 21px;
  border-right: 1px solid #888;
  color: #222;
}
.brand-more svg { width: 7px; height: 14px; }
.quick { display: flex; align-items: center; padding-left: 32px; gap: 7px; }
.quick > button { height: 26px; display: flex; align-items: center; }
.split { gap: 8px; }
.pick { border: 1px solid #888; margin: 0 -4px 0 -2px; }
.pick-icon { display: flex; align-items: center; justify-content: center; width: 25px; height: 24px; background: #b3b3b3; border-right: 1px solid #888; }
.pick-caret { display: flex; align-items: center; justify-content: center; width: 12px; }
.apptitle { margin-left: 390px; }

.ribbon {
  display: flex;
  flex: none;
  height: 87px;
  padding: 6px 0 2px;
  border-bottom: 1px solid #777;
}
.group { display: grid; border-right: 1px solid #c4c4c4; }
.group-boss { grid-template-columns: 78px 80px 156px; }
.group-cut { grid-template-columns: 59px 86px 67px 161px; }
.group-feat { grid-template-columns: 46px 62px 88px 106px; }
.group-ref { grid-template-columns: 64px 50px; }
.group-last { border: 0; padding-left: 5px; grid-template-columns: 60px; }
.big {
  display: flex;
  flex-direction: column;
  align-items: center;
  gap: 1px;
  padding-top: 6px;
  white-space: nowrap;
}
.big.low { padding-top: 13px; }
.big > .caret { margin: auto 0 8px; }
.pressed { background: #b3b3b3; border: 1px solid #777; }
.big.pressed { padding-top: 12px; }
.stack { display: flex; flex-direction: column; }
.stack button { display: flex; align-items: center; gap: 7px; height: 26px; padding: 0 0 2px 2px; white-space: nowrap; }

.tabs {
  display: flex;
  flex: none;
  height: 22px;
  background: #e6e4e3;
  border-bottom: 1px solid #3f4a57;
}
.tab { padding: 0 8px; border-right: 1px solid #888; background: #d6d5d5; color: #222; white-space: nowrap; }
.tab.active { padding-left: 2px; background: #f7f7f7; font-weight: 600; }

.work { display: flex; flex: 1; min-height: 0; }
.rail { width: 41px; flex: none; padding: 3px 0 0; }
.rail-group { width: 39px; min-height: 13px; padding: 4px 0 3px; border-bottom: 1px solid #999; }
.rail-group.first { padding-top: 7px; border-top: 2px dotted #999; }
.rail-group button { display: flex; align-items: center; gap: 8px; height: 26px; padding-left: 2px; }

.doc {
  display: flex;
  flex-direction: column;
  flex: 1;
  min-width: 0;
  padding-left: 1px;
  border-left: 1px solid #111;
  border-top-left-radius: 5px;
}
.doc-title {
  display: flex;
  flex: none;
  align-items: center;
  gap: 3px;
  height: 30px;
  padding: 6px 0 0 7px;
  background: linear-gradient(#98b8d9, #b9d0e8);
}
.doc-body { display: flex; flex: 1; min-height: 0; border-left: 7px solid #c0d1e6; }
.panel {
  position: relative;
  display: flex;
  flex-direction: column;
  flex: none;
  width: 229px;
  padding-right: 2px;
  border-right: 1px solid #808080;
}
.grip { height: 18px; margin-top: 3px; border: 1px solid #ccc; border-width: 1px 0; display: flex; justify-content: center; align-items: center; }
.grip::before, .flap::before { content: ""; width: 6px; height: 6px; border: 1px solid #aaa; border-radius: 50%; background: #e5e5e5; }
.panel-tabs { display: flex; height: 26px; margin-top: 4px; }
.ptab { display: flex; align-items: center; justify-content: center; width: 40px; border: 1px solid #888; border-left: 0; background: #d3d3d3; }
.ptab.on { background: #f7f7f7; border-bottom: 0; width: 41px; }
.pnext { flex: 1; display: flex; align-items: center; justify-content: center; }
.chev { width: 8px; height: 12px; fill: none; stroke: #555; stroke-width: 2; }
.chev.small { width: 6px; height: 9px; }
.filter { display: flex; align-items: center; gap: 4px; height: 26px; margin: 0 3px 0 4px; padding-left: 2px; border: 1px solid #c8c8c8; }
.filter input { flex: 1; min-width: 0; border: 0; background: none; font: inherit; }
.tree { flex: none; margin: 0; padding: 0; list-style: none; border-bottom: 4px solid #4a87a3; }
.tree li { display: flex; align-items: center; height: 22px; gap: 5px; padding-left: 8px; white-space: nowrap; overflow: hidden; }
.tree li.root { padding-left: 3px; }
.ico.wide { width: 20px; margin-right: -1px; }
.exp { width: 5px; height: 8px; margin-right: 8px; color: #555; }
.hscroll { display: flex; height: 16px; margin-top: auto; background: #f0f0f0; }
.hscroll button { width: 17px; display: flex; align-items: center; justify-content: center; }
.track { flex: 1; }
.thumb { width: 66%; height: 100%; background: #cdcdcd; }
.flap {
  position: absolute;
  top: 395px;
  right: -9px;
  width: 9px;
  height: 39px;
  display: flex;
  align-items: center;
  justify-content: center;
  border: 1px solid #808080;
  border-left: 0;
  background: #f7f7f7;
  z-index: 1;
}

.viewport {
  position: relative;
  flex: 1;
  min-width: 0;
  background:
    linear-gradient(rgba(253, 253, 253, 0) 53%, #fdfdfd 67%),
    linear-gradient(165deg, #fff 23%, #dde0ec 58%);
}
.scene { position: absolute; width: 100%; height: 100%; }
.mark { font-family: "Liberation Serif", "Noto Sans CJK SC", serif; font-size: 50px; fill: #eeeef0; opacity: .85; text-shadow: 1px 1px 1px #444; }
.mark-cjk { font-family: "Noto Sans CJK SC", sans-serif; font-size: 58px; font-weight: 300; }
.axis { font-family: "Noto Sans", sans-serif; font-size: 10px; }
.view-name { font-family: Lato, sans-serif; font-size: 14px; font-weight: 700; fill: #000; }
.viewbar { position: relative; display: flex; justify-content: flex-end; gap: 8px; padding: 7px 155px 0 0; }
.viewbar button { display: flex; align-items: center; }
.viewbar .menu { gap: 9px; }
.viewbar .caret { color: #888; width: 5px; }
```
